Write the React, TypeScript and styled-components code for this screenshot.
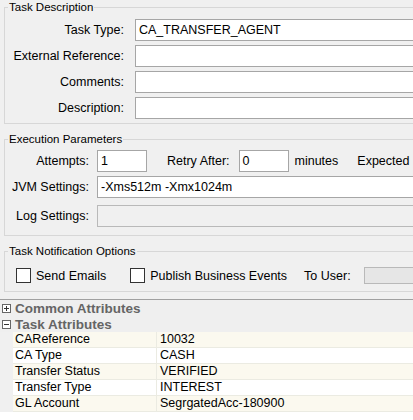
import styled, { createGlobalStyle } from 'styled-components';

const GlobalStyle = createGlobalStyle`
  html, body {
    margin: 0;
    padding: 0;
    background: #f0f0f0;
  }
  body {
    font-family: "Liberation Sans", Arial, sans-serif;
    color: #000;
    overflow: hidden;
  }
`;

const Page = styled.div`
  width: 413px;
  height: 420px;
  overflow: hidden;
  display: flex;
  flex-direction: column;
`;

const Group = styled.fieldset<{ $top: number; $bottom: number }>`
  margin: ${({ $top }) => $top}px -40px 0 4px;
  padding: 0 0 ${({ $bottom }) => $bottom}px 0;
  border: 1px solid #d7d7d7;
  min-width: 0;
`;

const Legend = styled.legend`
  margin-left: 3px;
  padding: 0 1px;
  font-size: 11.5px;
  line-height: 14px;
  color: #000;
`;

const FormGrid = styled.div<{ $label: number; $gap: number; $pad: number }>`
  display: grid;
  grid-template-columns: ${({ $label }) => $label}px 1fr;
  column-gap: ${({ $gap }) => $gap}px;
  row-gap: 4px;
  padding-top: ${({ $pad }) => $pad}px;
  align-items: center;
`;

const Label = styled.label<{ $top?: number }>`
  font-size: 12.5px;
  text-align: right;
  white-space: nowrap;
  margin-top: ${({ $top }) => $top ?? 0}px;
`;

const Inline = styled.span<{ $left?: number }>`
  font-size: 12.5px;
  margin-left: ${({ $left }) => $left ?? 0}px;
  white-space: nowrap;
`;

const Field = styled.div<{
  $width?: number;
  $disabled?: boolean;
  $height?: number;
  $top?: number;
  $left?: number;
  $fill?: string;
}>`
  box-sizing: border-box;
  height: ${({ $height }) => $height ?? 22}px;
  width: ${({ $width }) => ($width ? `${$width}px` : 'auto')};
  margin-top: ${({ $top }) => $top ?? 0}px;
  margin-left: ${({ $left }) => $left ?? 0}px;
  border: 1px solid ${({ $disabled }) => ($disabled ? '#b9b9b9' : '#a6a6a6')};
  background: ${({ $disabled, $fill }) => $fill ?? ($disabled ? '#f0f0f0' : '#fff')};
  font-size: 12.5px;
  line-height: 20px;
  padding: 0 3px;
  white-space: nowrap;
  overflow: hidden;
  flex-shrink: 0;
`;

const Row = styled.div`
  display: flex;
  align-items: center;
`;

const CheckRow = styled.div`
  display: flex;
  align-items: center;
  padding: 9px 0 0 11px;
`;

const Box = styled.span<{ $left?: number }>`
  box-sizing: border-box;
  width: 15px;
  height: 15px;
  margin-left: ${({ $left }) => $left ?? 0}px;
  border: 1px solid #333;
  background: #fff;
  flex-shrink: 0;
`;

const Divider = styled.div`
  margin-top: 7px;
  height: 1px;
  background: #a0a0a0;
`;

const Attributes = styled.div`
  flex: 1;
  background: #fff;
`;

const SectionHead = styled.div`
  display: flex;
  align-items: center;
  height: 16px;
  background: #efefef;
  padding-left: 2px;
  font-weight: bold;
  font-size: 13.5px;
  color: #656565;
`;

const Toggle = styled.svg`
  width: 9px;
  height: 9px;
  margin-right: 4px;
  flex-shrink: 0;
`;

const Table = styled.div`
  background: #f0f0f0;
  padding-left: 13px;
`;

const TableRow = styled.div<{ $alt: boolean }>`
  display: grid;
  grid-template-columns: 144px 1fr;
  height: 16px;
  box-sizing: border-box;
  border-bottom: 1px solid #ebebe2;
  background: ${({ $alt }) => ($alt ? '#fbf9ef' : '#fff')};
  font-size: 12.5px;
  line-height: 15px;
`;

const Cell = styled.div<{ $first?: boolean }>`
  padding-left: ${({ $first }) => ($first ? 2 : 3)}px;
  border-right: ${({ $first }) => ($first ? '1px solid #ebebe2' : 'none')};
  white-space: nowrap;
  overflow: hidden;
`;

function ToggleIcon({ open }: { open: boolean }) {
  return (
    <Toggle viewBox="0 0 9 9">
      <rect x="0.5" y="0.5" width="8" height="8" fill="#fff" stroke="#666" />
      <line x1="2" y1="4.5" x2="7" y2="4.5" stroke="#333" />
      {!open && <line x1="4.5" y1="2" x2="4.5" y2="7" stroke="#333" />}
    </Toggle>
  );
}

const attributes = [
  ['CAReference', '10032'],
  ['CA Type', 'CASH'],
  ['Transfer Status', 'VERIFIED'],
  ['Transfer Type', 'INTEREST'],
  ['GL Account', 'SegrgatedAcc-180900'],
];

export default function App() {
  return (
    <Page>
      <GlobalStyle />
      <Group $top={0} $bottom={4}>
        <Legend>Task Description</Legend>
        <FormGrid $label={119} $gap={11} $pad={5}>
          <Label>Task Type:</Label>
          <Field>CA_TRANSFER_AGENT</Field>
          <Label>External Reference:</Label>
          <Field />
          <Label>Comments:</Label>
          <Field />
          <Label>Description:</Label>
          <Field />
        </FormGrid>
      </Group>

      <Group $top={8} $bottom={8}>
        <Legend>Execution Parameters</Legend>
        <FormGrid $label={84} $gap={8} $pad={4}>
          <Label>Attempts:</Label>
          <Row>
            <Field $width={50}>1</Field>
            <Inline $left={20}>Retry After:</Inline>
            <Field $width={50} $left={9}>0</Field>
            <Inline $left={6}>minutes</Inline>
            <Inline $left={19}>Expected</Inline>
          </Row>
          <Label>JVM Settings:</Label>
          <Field>-Xms512m -Xmx1024m</Field>
          <Label $top={3}>Log Settings:</Label>
          <Field $disabled $top={3} />
        </FormGrid>
      </Group>

      <Group $top={8} $bottom={7}>
        <Legend>Task Notification Options</Legend>
        <CheckRow>
          <Box />
          <Inline $left={5}>Send Emails</Inline>
          <Box $left={24} />
          <Inline $left={5}>Publish Business Events</Inline>
          <Inline $left={17}>To User:</Inline>
          <Field $disabled $width={80} $height={17} $left={13} $fill="#e6e6e6" />
        </CheckRow>
      </Group>

      <Divider />
      <Attributes>
        <SectionHead>
          <ToggleIcon open={false} />
          Common Attributes
        </SectionHead>
        <SectionHead>
          <ToggleIcon open />
          Task Attributes
        </SectionHead>
        <Table>
          {attributes.map(([name, value], i) => (
            <TableRow key={name} $alt={i % 2 === 0}>
              <Cell $first>{name}</Cell>
              <Cell>{value}</Cell>
            </TableRow>
          ))}
        </Table>
      </Attributes>
    </Page>
  );
}
